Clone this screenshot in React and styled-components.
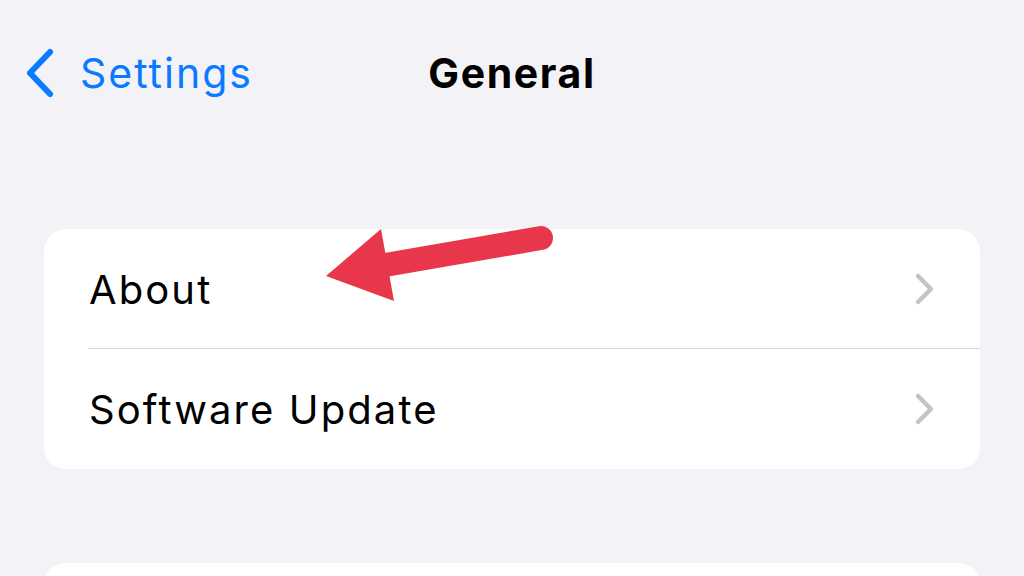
import React from 'react'
import styled, { createGlobalStyle } from 'styled-components'

const GlobalStyle = createGlobalStyle`
  html, body {
    margin: 0;
    padding: 0;
    background: #f2f2f7;
    font-family: Inter, "Liberation Sans", sans-serif;
    -webkit-font-smoothing: antialiased;
  }
`

const Screen = styled.div`
  position: relative;
  width: 1024px;
  height: 576px;
  overflow: hidden;
  background: #f2f2f7;
`

const NavBar = styled.div`
  display: grid;
  grid-template-columns: 1fr auto 1fr;
  align-items: center;
  height: 148px;
  padding: 0 24px;
  box-sizing: border-box;
`

const BackButton = styled.div`
  display: flex;
  align-items: center;
  gap: 24px;
  color: #0a7aff;
  font-size: 41px;
  letter-spacing: 2px;
  margin-top: -2px;
`

const Title = styled.div`
  font-size: 41px;
  font-weight: 700;
  color: #000;
  letter-spacing: 1.6px;
  margin-top: -2px;
`

const Content = styled.div`
  display: flex;
  flex-direction: column;
  gap: 94px;
  padding: 81px 44px 0;
`

const Card = styled.div`
  background: #fff;
  border-radius: 22px;
  overflow: hidden;
`

const Row = styled.div`
  display: flex;
  align-items: center;
  justify-content: space-between;
  height: 120px;
  padding: 0 44px 0 45px;
  position: relative;
  ${props => props.divider && `
    &::after {
      content: '';
      position: absolute;
      left: 44px;
      right: 0;
      bottom: 0;
      height: 1px;
      background: #d4d4d8;
    }
  `}
`

const Label = styled.span`
  font-size: 40px;
  color: #000;
  letter-spacing: 2.1px;
`

const Arrow = styled.svg`
  position: absolute;
  left: 0;
  top: 0;
  pointer-events: none;
`

const BackChevron = () => (
  <svg width="32" height="52" viewBox="0 0 32 52">
    <path d="M26 5 L6 26 L26 47" fill="none" stroke="#0a7aff" strokeWidth="6" strokeLinecap="round" strokeLinejoin="round" />
  </svg>
)

const Disclosure = () => (
  <svg width="22" height="34" viewBox="0 0 22 34">
    <path d="M4 4 L17 17 L4 30" fill="none" stroke="#c4c4c8" strokeWidth="4.5" strokeLinecap="round" strokeLinejoin="round" />
  </svg>
)

const SettingsRow = ({ label, divider }) => (
  <Row divider={divider}>
    <Label>{label}</Label>
    <Disclosure />
  </Row>
)

const App = () => (
  <Screen>
    <GlobalStyle />
    <NavBar>
      <BackButton>
        <BackChevron />
        <span>Settings</span>
      </BackButton>
      <Title>General</Title>
      <div />
    </NavBar>
    <Content>
      <Card>
        <SettingsRow label="About" divider />
        <SettingsRow label="Software Update" />
      </Card>
      <Card>
        <SettingsRow label="" />
      </Card>
    </Content>
    <Arrow width="1024" height="576" viewBox="0 0 1024 576">
      <line x1="541" y1="238" x2="385" y2="265" stroke="#e8374a" strokeWidth="24" strokeLinecap="round" />
      <polygon points="326,276 381,229 394,301" fill="#e8374a" />
    </Arrow>
  </Screen>
)

export default App
